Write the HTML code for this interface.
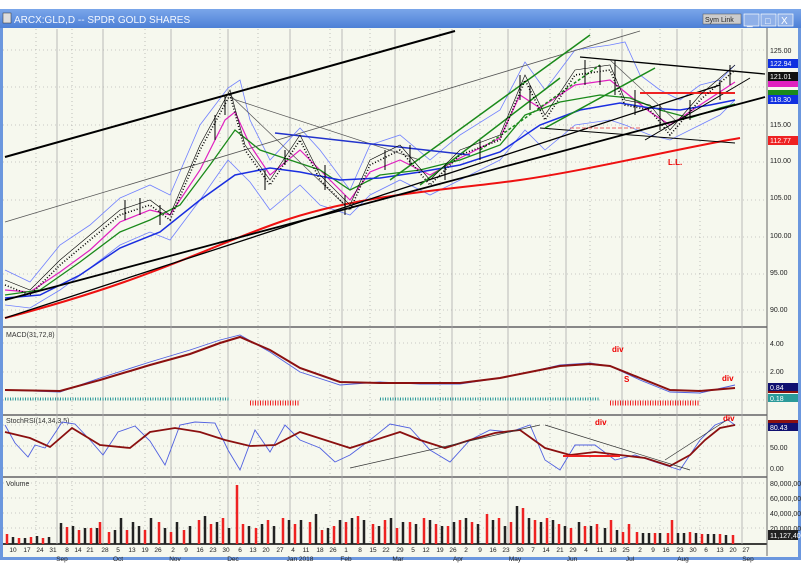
<!DOCTYPE html>
<html><head><meta charset="utf-8"><style>
body{margin:0;background:#fff;width:801px;height:573px;overflow:hidden;font-family:"Liberation Sans",sans-serif}
svg text{font-family:"Liberation Sans",sans-serif}
</style></head><body>
<svg width="801" height="573" viewBox="0 0 801 573" xmlns="http://www.w3.org/2000/svg">
<defs><linearGradient id="tb" x1="0" y1="0" x2="0" y2="1"><stop offset="0" stop-color="#7aa6ea"/><stop offset="1" stop-color="#4d80d6"/></linearGradient></defs>
<rect x="0" y="9" width="801" height="551" fill="#6b97de"/>
<rect x="0" y="9" width="801" height="19" fill="url(#tb)"/>
<rect x="3" y="13" width="8" height="10" fill="#ddd" stroke="#333" stroke-width="0.5"/>
<text x="14" y="23" font-size="10" fill="#f4f8ff">ARCX:GLD,D -- SPDR GOLD SHARES</text>
<rect x="703" y="14" width="38" height="10" fill="#ccc" stroke="#555" stroke-width="0.5"/>
<text x="705" y="22" font-size="7" fill="#222">Sym Link</text>
<rect x="744" y="14" width="15" height="12" fill="#8fb0e8" stroke="#fff" stroke-width="0.7"/>
<rect x="761" y="14" width="15" height="12" fill="#8fb0e8" stroke="#fff" stroke-width="0.7"/>
<rect x="778" y="14" width="15" height="12" fill="#8fb0e8" stroke="#fff" stroke-width="0.7"/>
<text x="747" y="25" font-size="10" fill="#fff">_</text><text x="765" y="24" font-size="9" fill="#fff">□</text><text x="781" y="24" font-size="10" fill="#fff">X</text>
<rect x="3" y="28" width="795" height="529" fill="#f6f8ee"/>
<g stroke="#888" stroke-width="2">
<line x1="3" y1="327" x2="767" y2="327"/><line x1="3" y1="415" x2="767" y2="415"/><line x1="3" y1="477" x2="767" y2="477"/>
</g>
<line x1="3" y1="544" x2="767" y2="544" stroke="#000" stroke-width="1.5"/>
<line x1="767" y1="28" x2="767" y2="556" stroke="#666" stroke-width="1"/>
<g stroke="#999" stroke-width="0.6" stroke-dasharray="1,3">
<line x1="3" y1="50" x2="767" y2="50"/><line x1="3" y1="87" x2="767" y2="87"/><line x1="3" y1="125" x2="767" y2="125"/><line x1="3" y1="162" x2="767" y2="162"/><line x1="3" y1="200" x2="767" y2="200"/><line x1="3" y1="237" x2="767" y2="237"/><line x1="3" y1="274" x2="767" y2="274"/><line x1="3" y1="310" x2="767" y2="310"/>
<line x1="3" y1="343" x2="767" y2="343"/><line x1="3" y1="372" x2="767" y2="372"/><line x1="3" y1="400" x2="767" y2="400"/>
<line x1="3" y1="425" x2="767" y2="425"/><line x1="3" y1="446" x2="767" y2="446"/><line x1="3" y1="468" x2="767" y2="468"/>
<line x1="3" y1="483" x2="767" y2="483"/><line x1="3" y1="498" x2="767" y2="498"/><line x1="3" y1="513" x2="767" y2="513"/><line x1="3" y1="528" x2="767" y2="528"/>
<line x1="36" y1="29" x2="36" y2="544"/><line x1="72" y1="29" x2="72" y2="544"/><line x1="145" y1="29" x2="145" y2="544"/><line x1="220" y1="29" x2="220" y2="544"/><line x1="258" y1="29" x2="258" y2="544"/><line x1="330" y1="29" x2="330" y2="544"/><line x1="370" y1="29" x2="370" y2="544"/><line x1="440" y1="29" x2="440" y2="544"/><line x1="480" y1="29" x2="480" y2="544"/><line x1="550" y1="29" x2="550" y2="544"/><line x1="590" y1="29" x2="590" y2="544"/><line x1="660" y1="29" x2="660" y2="544"/><line x1="700" y1="29" x2="700" y2="544"/>
</g>
<g stroke="#aaa" stroke-width="0.8">
<line x1="57" y1="29" x2="57" y2="544"/><line x1="103" y1="29" x2="103" y2="544"/><line x1="171" y1="29" x2="171" y2="544"/><line x1="228" y1="29" x2="228" y2="544"/><line x1="290" y1="29" x2="290" y2="544"/><line x1="342" y1="29" x2="342" y2="544"/><line x1="395" y1="29" x2="395" y2="544"/><line x1="452" y1="29" x2="452" y2="544"/><line x1="508" y1="29" x2="508" y2="544"/><line x1="566" y1="29" x2="566" y2="544"/><line x1="622" y1="29" x2="622" y2="544"/><line x1="677" y1="29" x2="677" y2="544"/><line x1="742" y1="29" x2="742" y2="544"/>
</g>
<g fill="none">
<polyline stroke="#7080ff" stroke-width="0.8" points="5,270 30,282 60,245 90,225 120,198 150,185 170,195 200,125 228,88 240,80 250,120 270,160 300,128 320,150 350,190 370,145 400,135 430,160 460,135 500,110 525,62 545,90 575,50 610,45 625,42 640,75 660,90 680,100 700,85 720,80 735,65"/>
<polyline stroke="#7080ff" stroke-width="0.8" points="5,305 30,308 60,290 90,268 120,245 150,232 170,240 200,200 228,160 250,182 270,210 300,185 320,205 350,215 370,195 400,180 430,195 460,180 500,160 525,130 545,150 575,125 610,120 625,125 650,135 670,140 700,125 720,115 735,100"/>
<polyline stroke="#e020c0" stroke-width="1.2" points="5,290 30,292 60,272 90,250 120,222 150,210 170,215 200,170 225,120 235,112 250,145 270,175 300,150 320,170 350,200 370,172 400,160 430,175 460,158 500,138 520,95 540,108 575,85 610,80 625,92 650,112 670,125 700,105 735,82"/>
<polyline stroke="#1a8a1a" stroke-width="1.3" points="5,295 40,290 80,262 120,232 150,220 180,205 210,165 235,130 260,150 290,160 320,170 350,190 380,175 420,170 460,160 500,145 525,115 560,102 600,95 630,98 660,110 690,118 720,108 735,104"/>
<polyline stroke="#1a2ee0" stroke-width="1.5" points="5,298 40,295 80,275 120,248 160,232 200,200 235,175 270,168 300,172 340,180 380,178 420,172 460,165 500,152 540,125 580,110 620,103 650,108 680,110 710,105 735,100"/>
<path stroke="#ee1111" stroke-width="2" d="M5,318 C150,280 200,250 280,222 S450,190 520,180 S680,148 740,138"/>
<g stroke="#000">
<line x1="5" y1="157" x2="455" y2="31" stroke-width="2"/>
<line x1="5" y1="222" x2="640" y2="31" stroke-width="0.8" stroke="#555"/>
<line x1="5" y1="300" x2="765" y2="97" stroke-width="1.8"/>
<line x1="5" y1="318" x2="720" y2="85" stroke-width="1.3"/>
<line x1="580" y1="57" x2="765" y2="74" stroke-width="1.3"/>
<line x1="540" y1="128" x2="735" y2="143" stroke-width="1"/>
<line x1="645" y1="140" x2="750" y2="78" stroke-width="1"/>
<line x1="230" y1="95" x2="350" y2="210" stroke-width="0.7" stroke="#555"/>
<line x1="230" y1="98" x2="420" y2="160" stroke-width="0.7" stroke="#555"/>
<line x1="610" y1="60" x2="675" y2="120" stroke-width="0.7" stroke="#555"/>
</g>
<g stroke="#1a8a1a" stroke-width="1.5">
<line x1="390" y1="180" x2="590" y2="35"/><line x1="420" y1="185" x2="560" y2="78"/><line x1="545" y1="128" x2="655" y2="68"/><line x1="480" y1="150" x2="600" y2="65" stroke-dasharray="3,2"/>
</g>
<line x1="275" y1="133" x2="470" y2="155" stroke="#2233cc" stroke-width="1.5"/>
<line x1="640" y1="93" x2="735" y2="93" stroke="#ee2222" stroke-width="2"/>
<line x1="570" y1="128" x2="640" y2="128" stroke="#ee6666" stroke-width="1" stroke-dasharray="4,2"/>
</g>
<polyline fill="none" stroke="#000" stroke-width="1.6" stroke-dasharray="1,2" points="5,285 30,295 60,265 90,240 120,215 150,205 170,220 200,150 230,95 245,150 270,185 300,140 320,180 350,210 370,165 400,150 430,185 460,155 500,140 525,80 545,120 575,75 610,70 625,105 650,110 670,135 700,100 735,70"/>
<polyline fill="none" stroke="#000" stroke-width="0.6" points="5,280 30,290 60,260 90,235 120,210 150,200 170,215 200,145 230,90 245,145 270,180 300,135 320,175 350,205 370,160 400,145 430,180 460,150 500,135 525,75 545,115 575,70 610,65 625,100 650,105 670,130 700,95 735,65"/>
<path stroke="#000" stroke-width="1" d="M125,200V220 M140,198V215 M160,205V225 M215,115V140 M225,95V115 M265,170V190 M285,150V165 M325,165V190 M345,195V215 M385,150V170 M410,145V165 M445,165V180 M480,140V160 M520,75V100 M530,85V110 M585,60V85 M600,65V85 M615,60V95 M635,90V115 M660,105V130 M690,100V120 M720,80V100 M730,65V85"/>
<text x="668" y="165" font-size="8" fill="#e00" font-weight="bold">L.L.</text>
<text x="6" y="337" font-size="7" fill="#333">MACD(31,72,8)</text>
<polyline fill="none" stroke="#5060e0" stroke-width="0.9" points="5,390 60,392 100,378 150,362 190,350 220,340 240,335 270,352 300,372 340,385 380,382 420,384 460,384 500,378 530,372 560,365 590,363 610,366 640,380 670,392 700,393 735,385"/>
<polyline fill="none" stroke="#8b1010" stroke-width="2" points="5,390 60,391 100,380 150,365 190,354 220,343 240,337 270,350 300,368 340,382 380,383 420,383 460,383 500,378 530,372 560,366 590,364 610,366 640,378 670,390 700,391 735,388"/>
<path d="M5,399 H230" stroke="#2a9a9a" stroke-width="3" stroke-dasharray="1,1.5"/>
<path d="M380,399 H600" stroke="#2a9a9a" stroke-width="3" stroke-dasharray="1,1.5"/>
<path d="M250,403 H300 M610,403 H700" stroke="#ee2222" stroke-width="5" stroke-dasharray="1,1.5"/>
<text x="612" y="352" font-size="8" fill="#e00" font-weight="bold">div</text>
<text x="624" y="382" font-size="8" fill="#e00" font-weight="bold">S</text>
<text x="722" y="381" font-size="8" fill="#e00" font-weight="bold">div</text>
<text x="6" y="423" font-size="7" fill="#333">StochRSI(14,34,3,5)</text>
<polyline fill="none" stroke="#5060e0" stroke-width="0.9" points="5,425 15,443 28,457 35,445 45,448 57,430 62,422 75,424 90,440 103,455 118,432 135,426 150,441 165,465 180,425 195,422 215,423 228,450 240,470 255,430 270,452 285,425 300,440 320,448 335,462 350,455 370,440 390,424 410,428 430,450 450,462 470,440 490,430 510,432 530,425 545,460 560,470 575,445 595,445 615,460 635,455 655,462 680,470 700,440 715,425 728,420 735,425"/>
<polyline fill="none" stroke="#8b1010" stroke-width="1.8" points="5,432 30,438 50,447 72,428 100,445 130,448 150,432 175,428 200,432 225,440 250,446 275,445 300,432 325,440 350,448 375,440 400,432 420,440 445,448 470,440 495,433 520,430 545,448 570,455 595,452 620,455 645,458 670,466 690,455 705,440 720,428 735,425"/>
<line x1="350" y1="468" x2="540" y2="425" stroke="#333" stroke-width="0.7"/>
<line x1="545" y1="425" x2="690" y2="470" stroke="#333" stroke-width="0.7"/>
<line x1="665" y1="460" x2="730" y2="418" stroke="#333" stroke-width="0.7"/>
<line x1="563" y1="456" x2="620" y2="456" stroke="#ee2222" stroke-width="2"/>
<text x="595" y="425" font-size="8" fill="#e00" font-weight="bold">div</text>
<text x="723" y="421" font-size="8" fill="#e00" font-weight="bold">div</text>
<text x="6" y="486" font-size="7" fill="#333">Volume</text>
<path stroke="#ee2222" stroke-width="2.5" d="M7,544V534 M19,544V538 M31,544V537 M43,544V538 M67,544V527 M79,544V530 M91,544V528 M100,544V522 M109,544V532 M127,544V530 M145,544V530 M159,544V522 M171,544V532 M184,544V530 M199,544V520 M211,544V524 M223,544V518 M237,544V485 M243,544V524 M256,544V528 M268,544V520 M283,544V518 M295,544V524 M310,544V522 M322,544V530 M334,544V526 M346,544V522 M358,544V516 M373,544V524 M385,544V520 M397,544V528 M410,544V522 M424,544V518 M436,544V524 M448,544V526 M460,544V520 M472,544V522 M487,544V514 M499,544V518 M511,544V522 M523,544V508 M535,544V520 M547,544V518 M559,544V524 M571,544V528 M585,544V526 M597,544V524 M611,544V520 M623,544V532 M629,544V524 M637,544V532 M655,544V533 M668,544V533 M672,544V520 M690,544V532 M702,544V534 M720,544V534 M733,544V535"/>
<path stroke="#222" stroke-width="2.5" d="M13,544V537 M25,544V538 M37,544V536 M49,544V537 M61,544V523 M73,544V526 M85,544V528 M97,544V528 M115,544V530 M121,544V518 M133,544V522 M139,544V526 M151,544V518 M165,544V528 M177,544V522 M190,544V526 M205,544V516 M217,544V522 M229,544V528 M249,544V526 M262,544V524 M274,544V526 M289,544V520 M301,544V520 M316,544V514 M328,544V528 M340,544V520 M352,544V518 M364,544V520 M379,544V526 M391,544V518 M403,544V522 M416,544V524 M430,544V520 M442,544V526 M454,544V522 M466,544V518 M478,544V524 M493,544V520 M505,544V526 M517,544V506 M529,544V518 M541,544V522 M553,544V520 M565,544V526 M579,544V522 M591,544V526 M605,544V528 M617,544V530 M643,544V533 M649,544V533 M660,544V533 M678,544V533 M684,544V533 M696,544V533 M708,544V534 M714,544V534 M726,544V535"/>
<g font-size="7" fill="#222">
<text x="770" y="53">125.00</text><text x="770" y="127">115.00</text><text x="770" y="163">110.00</text><text x="770" y="200">105.00</text><text x="770" y="238">100.00</text><text x="770" y="275">95.00</text><text x="770" y="312">90.00</text>
<text x="770" y="346">4.00</text><text x="770" y="374">2.00</text>
<text x="770" y="450">50.00</text><text x="770" y="471">0.00</text>
<text x="770" y="486">80,000,000</text><text x="770" y="501">60,000,000</text><text x="770" y="516">40,000,000</text><text x="770" y="531">20,000,000</text>
</g>
<rect x="768" y="59" width="30" height="9" fill="#1030e0"/><text x="770" y="66" font-size="7" fill="#fff">122.94</text>
<rect x="768" y="72" width="30" height="9" fill="#111"/><text x="770" y="79" font-size="7" fill="#fff">121.01</text>
<rect x="768" y="81" width="30" height="6" fill="#e020c0"/>
<rect x="768" y="90" width="30" height="5" fill="#1a8a1a"/>
<rect x="768" y="95" width="30" height="9" fill="#1030e0"/><text x="770" y="102" font-size="7" fill="#fff">118.30</text>
<rect x="768" y="136" width="30" height="9" fill="#ee2222"/><text x="770" y="143" font-size="7" fill="#fff">112.77</text>
<rect x="768" y="383" width="30" height="8" fill="#101070"/><text x="770" y="390" font-size="7" fill="#fff">0.84</text>
<rect x="768" y="391" width="30" height="2" fill="#8b1010"/>
<rect x="768" y="394" width="30" height="8" fill="#2a9a9a"/><text x="770" y="401" font-size="7" fill="#fff">0.18</text>
<rect x="768" y="420" width="30" height="3" fill="#8b1010"/>
<rect x="768" y="423" width="30" height="8" fill="#101070"/><text x="770" y="430" font-size="7" fill="#fff">80.43</text>
<rect x="768" y="530" width="30" height="10" fill="#222"/><text x="770" y="538" font-size="7" fill="#fff">11,127,400</text>
<g font-size="6.5" fill="#222" text-anchor="middle">
<text x="13" y="552">10</text><text x="27" y="552">17</text><text x="40" y="552">24</text><text x="53" y="552">31</text><text x="67" y="552">8</text><text x="78" y="552">14</text><text x="90" y="552">21</text><text x="105" y="552">28</text><text x="118" y="552">5</text><text x="132" y="552">13</text><text x="145" y="552">19</text><text x="158" y="552">26</text><text x="173" y="552">2</text><text x="186" y="552">9</text><text x="200" y="552">16</text><text x="213" y="552">23</text><text x="226" y="552">30</text><text x="240" y="552">6</text><text x="253" y="552">13</text><text x="266" y="552">20</text><text x="280" y="552">27</text><text x="293" y="552">4</text><text x="306" y="552">11</text><text x="320" y="552">18</text><text x="333" y="552">26</text><text x="346" y="552">1</text><text x="360" y="552">8</text><text x="373" y="552">15</text><text x="386" y="552">22</text><text x="400" y="552">29</text><text x="413" y="552">5</text><text x="426" y="552">12</text><text x="440" y="552">19</text><text x="453" y="552">26</text><text x="466" y="552">2</text><text x="480" y="552">9</text><text x="493" y="552">16</text><text x="506" y="552">23</text><text x="520" y="552">30</text><text x="533" y="552">7</text><text x="546" y="552">14</text><text x="560" y="552">21</text><text x="573" y="552">29</text><text x="586" y="552">4</text><text x="600" y="552">11</text><text x="613" y="552">18</text><text x="626" y="552">25</text><text x="640" y="552">2</text><text x="653" y="552">9</text><text x="666" y="552">16</text><text x="680" y="552">23</text><text x="693" y="552">30</text><text x="706" y="552">6</text><text x="720" y="552">13</text><text x="733" y="552">20</text><text x="746" y="552">27</text>
<text x="62" y="561">Sep</text><text x="118" y="561">Oct</text><text x="175" y="561">Nov</text><text x="233" y="561">Dec</text><text x="300" y="561">Jan 2018</text><text x="346" y="561">Feb</text><text x="398" y="561">Mar</text><text x="458" y="561">Apr</text><text x="515" y="561">May</text><text x="572" y="561">Jun</text><text x="630" y="561">Jul</text><text x="683" y="561">Aug</text><text x="748" y="561">Sep</text>
</g>
</svg>
</body></html>
